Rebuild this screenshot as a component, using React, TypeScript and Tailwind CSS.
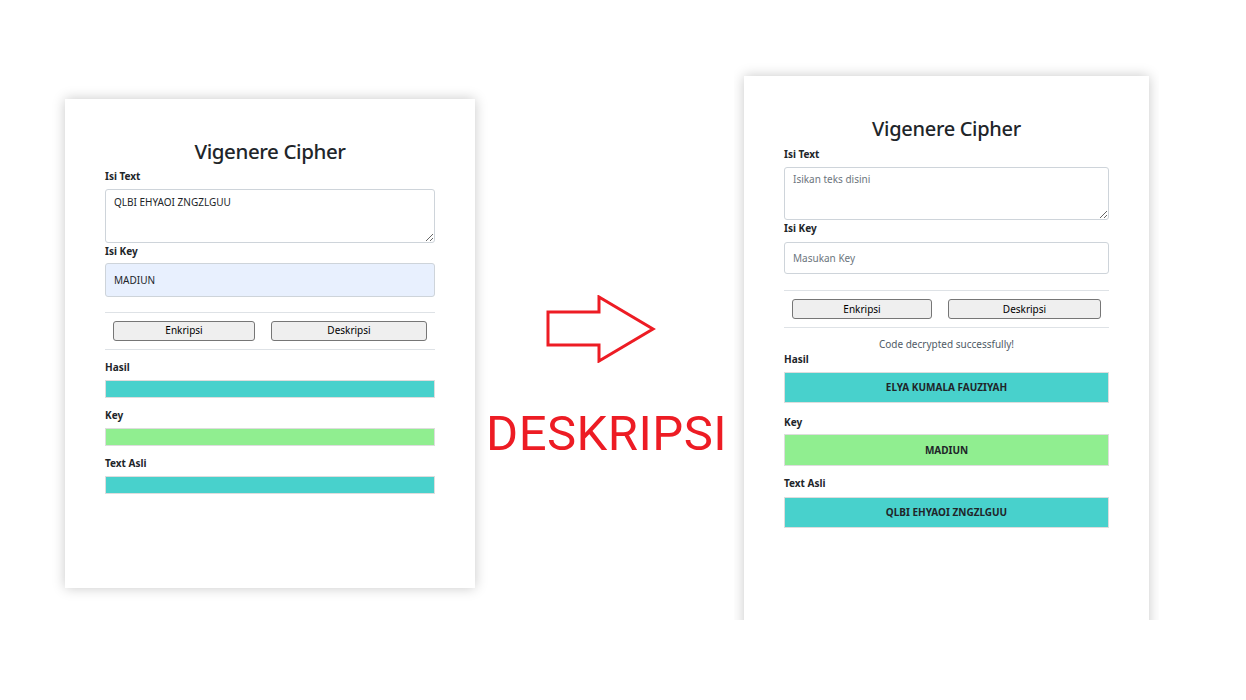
const font = { fontFamily: '"Noto Sans", "Open Sans", sans-serif' };

const Label = ({ text, className }: { text: string; className: string }) => (
  <div className={`text-[10px] font-bold leading-none text-[#212529] ${className}`}>{text}</div>
);

const Arrow = () => (
  <svg width="110" height="68" viewBox="0 0 110 68" className="ml-[71px] mt-[295px]">
    <polygon
      points="2,17 53,17 53,2 107,34 53,66 53,50 2,50"
      fill="none"
      stroke="#ed1c24"
      strokeWidth="3"
      strokeLinejoin="miter"
    />
  </svg>
);

export default function App() {
  return (
    <div className="w-[1246px] h-[700px] bg-white flex items-start overflow-hidden text-[#212529]" style={font}>
      {/* Sebelum: form terisi */}
      <div className="ml-[65px] mt-[99px] w-[410px] h-[489px] shrink-0 bg-white shadow-[0_0_12px_rgba(0,0,0,0.22)] px-[40px] pt-[42px]">
        <h1 className="text-[20.5px] leading-none text-center font-medium tracking-[-0.4px]">Vigenere Cipher</h1>
        <Label text="Isi Text" className="mt-[9px]" />
        <textarea
          className="block mt-[8px] w-full h-[54px] border border-[#ced4da] rounded-[3px] px-2 pt-[5px] text-[10px] leading-[14px] text-[#212529] outline-none"
          defaultValue="QLBI EHYAOI ZNGZLGUU"
        />
        <Label text="Isi Key" className="mt-[3px]" />
        <input
          className="block mt-[7px] w-full h-[34px] border border-[#ced4da] rounded-[3px] px-2 text-[10px] bg-[#e8f0fe] text-[#212529] outline-none"
          defaultValue="MADIUN"
        />
        <div className="mt-[15px] border-t border-[#dee2e6]" />
        <div className="flex gap-4 px-2 mt-[8px]">
          <button className="w-[142px] h-[20px] border border-[#767676] bg-[#efefef] rounded-[3px] text-[10px] text-black">Enkripsi</button>
          <button className="w-[156px] h-[20px] border border-[#767676] bg-[#efefef] rounded-[3px] text-[10px] text-black">Deskripsi</button>
        </div>
        <div className="mt-[8px] border-t border-[#dee2e6]" />
        <Label text="Hasil" className="mt-[12px]" />
        <div className="mt-[8px] h-[18px] border border-[#dddddd] bg-[#48d1cc]" />
        <Label text="Key" className="mt-[12px]" />
        <div className="mt-[8px] h-[18px] border border-[#dddddd] bg-[#90ee90]" />
        <Label text="Text Asli" className="mt-[12px]" />
        <div className="mt-[8px] h-[18px] border border-[#dddddd] bg-[#48d1cc]" />
      </div>

      {/* Tengah: panah dan keterangan */}
      <div className="w-[259px] shrink-0 flex flex-col">
        <Arrow />
        <div
          className="ml-[11px] mt-[46px] text-[49px] leading-none text-[#ed1c24] tracking-[0.5px]"
          style={{ fontFamily: 'Roboto, "Noto Sans", sans-serif' }}
        >
          DESKRIPSI
        </div>
      </div>

      {/* Sesudah: hasil dekripsi */}
      <div className="w-[425px] h-[620px] shrink-0 overflow-hidden px-[10px]">
        <div className="mt-[76px] w-[405px] h-[580px] bg-white shadow-[0_0_12px_rgba(0,0,0,0.22)] px-[40px] pt-[43px]">
          <h1 className="text-[20px] leading-none text-center font-medium tracking-[-0.3px]">Vigenere Cipher</h1>
          <Label text="Isi Text" className="mt-[10px]" />
          <textarea
            className="block mt-[8px] w-full h-[53px] border border-[#ced4da] rounded-[3px] px-2 pt-[4px] text-[10px] leading-[14px] text-[#212529] placeholder:text-[#6c757d] outline-none"
            placeholder="Isikan teks disini"
          />
          <Label text="Isi Key" className="mt-[3px]" />
          <input
            className="block mt-[9px] w-full h-[32px] border border-[#ced4da] rounded-[3px] px-2 text-[10px] bg-white text-[#212529] placeholder:text-[#6c757d] outline-none"
            placeholder="Masukan Key"
          />
          <div className="mt-[16px] border-t border-[#dee2e6]" />
          <div className="flex gap-4 px-2 mt-[8px]">
            <button className="w-[140px] h-[20px] border border-[#767676] bg-[#efefef] rounded-[3px] text-[10px] text-black">Enkripsi</button>
            <button className="w-[153px] h-[20px] border border-[#767676] bg-[#efefef] rounded-[3px] text-[10px] text-black">Deskripsi</button>
          </div>
          <div className="mt-[8px] border-t border-[#dee2e6]" />
          <p className="mt-[11px] text-[10px] leading-none text-center text-[#4f5b66]">Code decrypted successfully!</p>
          <Label text="Hasil" className="mt-[5px]" />
          <div className="mt-[8px] h-[31px] border border-[#dddddd] bg-[#48d1cc] flex items-center justify-center text-[10px] font-bold">
            ELYA KUMALA FAUZIYAH
          </div>
          <Label text="Key" className="mt-[14px]" />
          <div className="mt-[7px] h-[32px] border border-[#dddddd] bg-[#90ee90] flex items-center justify-center text-[10px] font-bold">
            MADIUN
          </div>
          <Label text="Text Asli" className="mt-[12px]" />
          <div className="mt-[9px] h-[31px] border border-[#dddddd] bg-[#48d1cc] flex items-center justify-center text-[10px] font-bold">
            QLBI EHYAOI ZNGZLGUU
          </div>
        </div>
      </div>
    </div>
  );
}
